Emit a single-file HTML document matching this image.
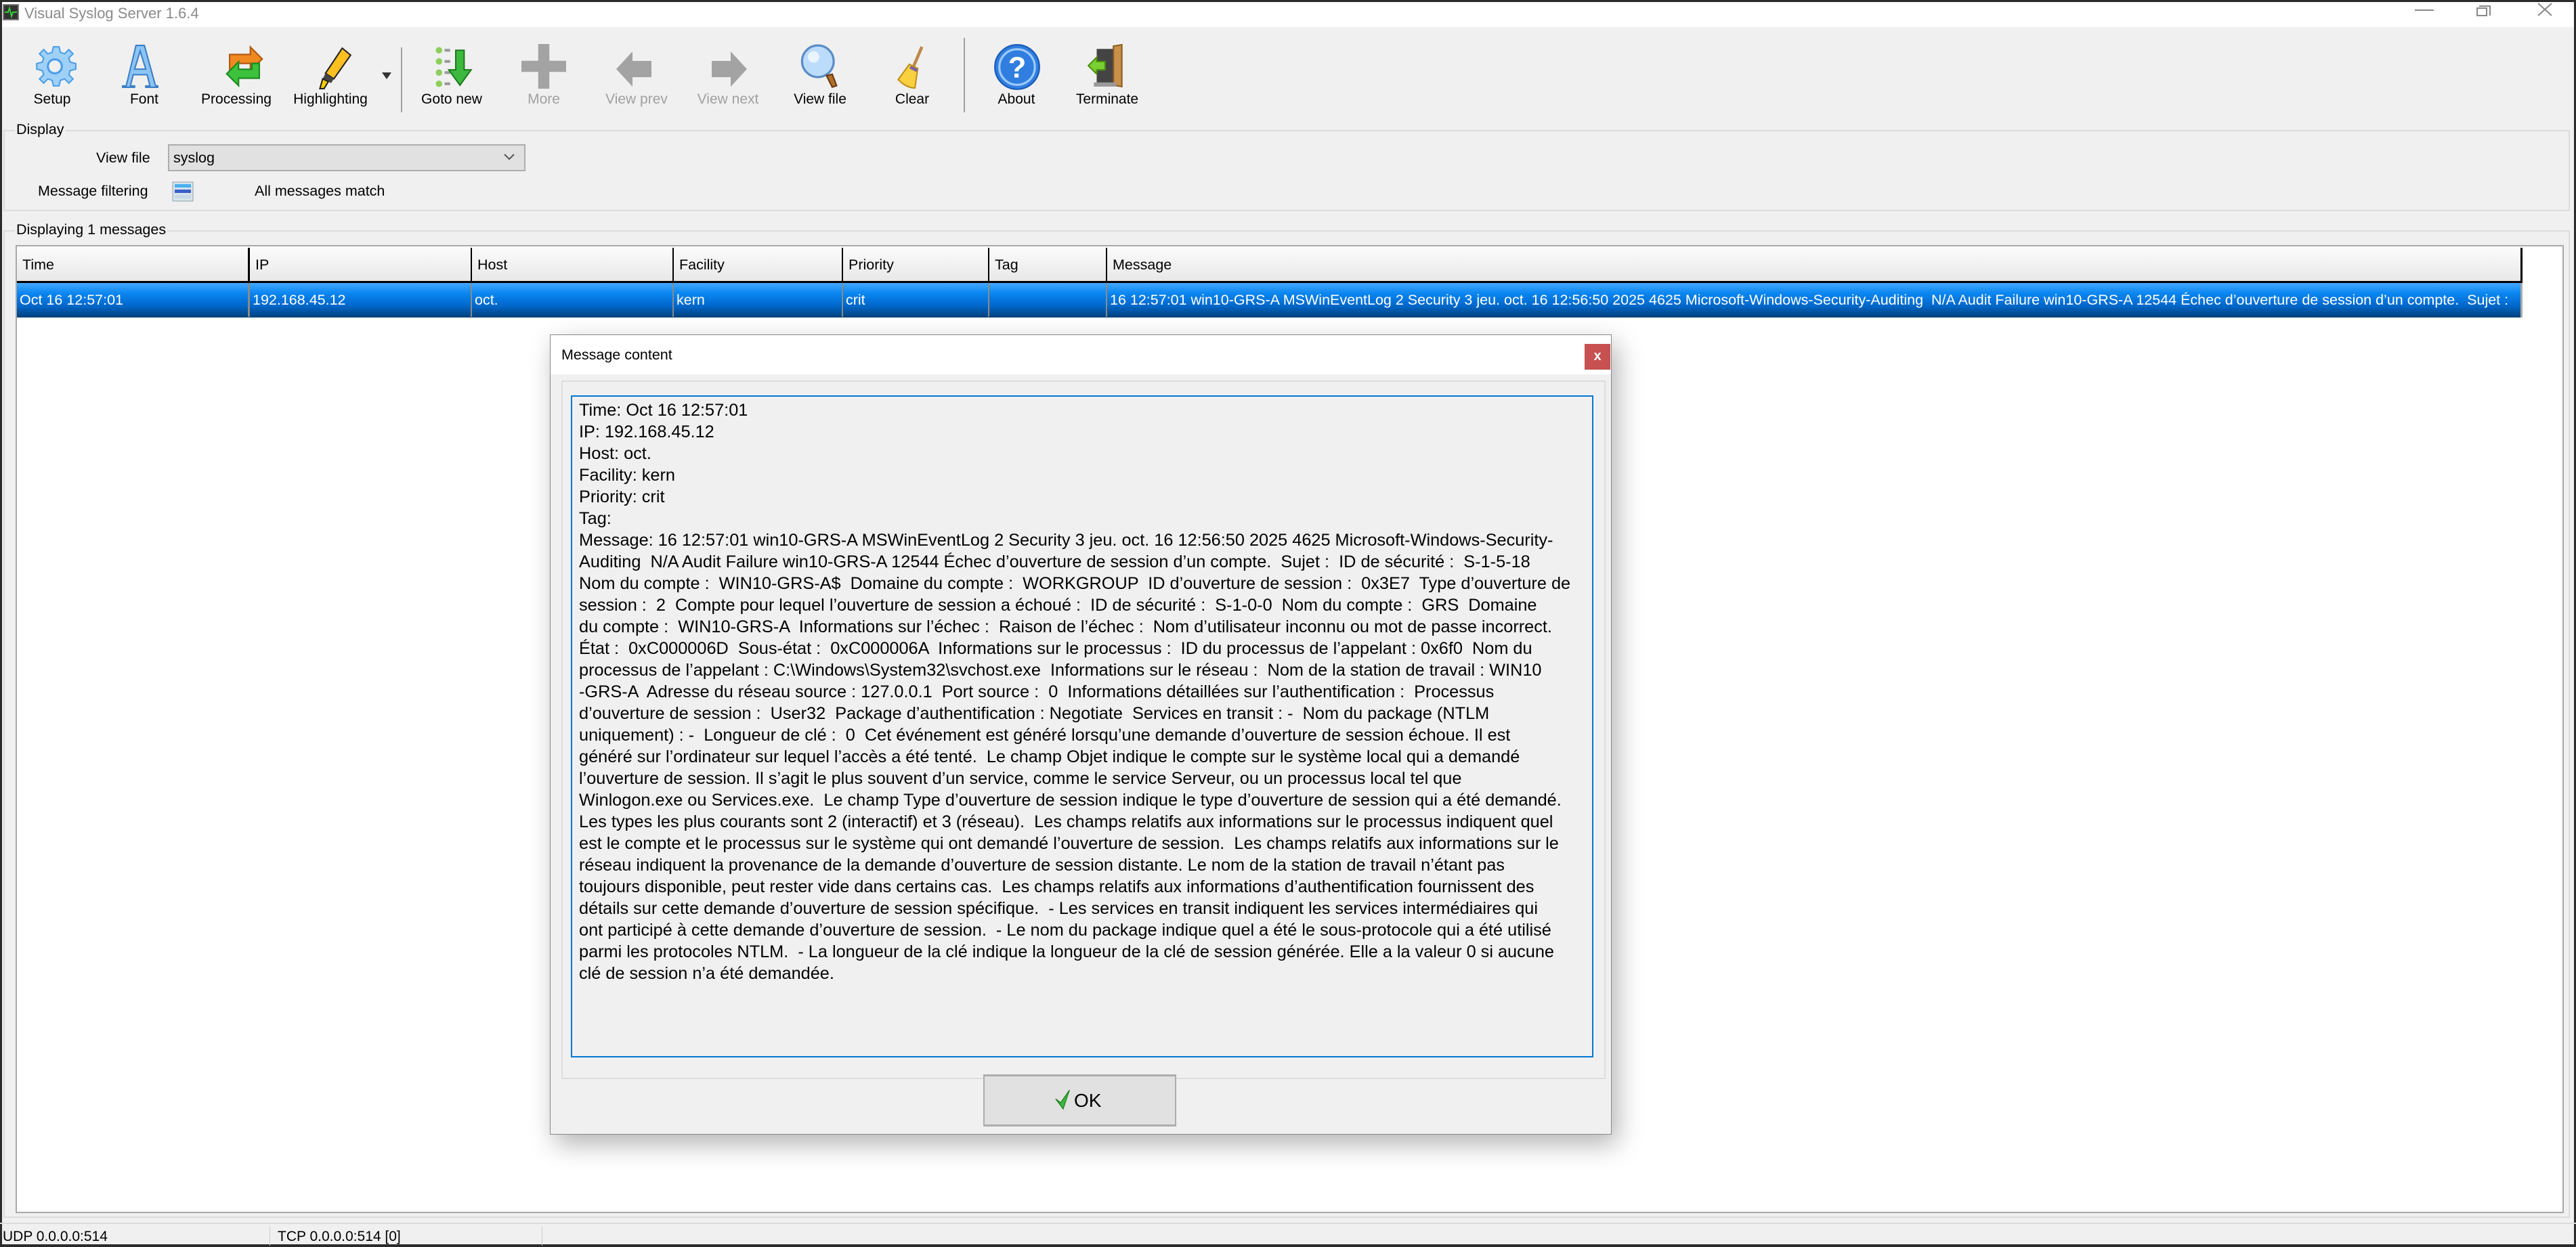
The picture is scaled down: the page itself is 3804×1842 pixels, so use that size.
<!DOCTYPE html>
<html><head><meta charset="utf-8">
<style>
*{margin:0;padding:0;box-sizing:border-box}
body{width:3804px;height:1842px;background:#f0f0f0;font-family:"Liberation Sans",Tahoma,sans-serif;color:#000;position:relative;overflow:hidden}
.a{position:absolute;white-space:nowrap}
.lbl{font-size:21px;transform:translateX(-50%);top:135px}
.dis{color:#a0a0a0}
.hd{position:absolute;top:0;height:51px;font-size:21.5px;line-height:50px;padding-left:8px}
.cell{position:absolute;top:0;height:50px;font-size:21.5px;line-height:50px;padding-left:4px;color:#fff}
#txt div{height:32px;line-height:32px}
</style></head><body>
<div class="a" style="left:0;top:0;width:3804px;height:3px;background:#2b2b2b"></div>
<div class="a" style="left:0;top:0;width:3px;height:1842px;background:#2b2b2b"></div>
<div class="a" style="left:3801px;top:0;width:3px;height:1842px;background:#2b2b2b"></div>
<div class="a" style="left:0;top:1838px;width:3804px;height:4px;background:#2b2b2b"></div>
<div class="a" style="left:3px;top:3px;width:3798px;height:37px;background:#fff"></div>
<div class="a" style="left:4px;top:6px;width:24px;height:24px;background:#333;border:2px solid #777"><svg width="20" height="20"><path d="M1 10h5l2-6 3 12 2-6h6" stroke="#3c3" stroke-width="2" fill="none"/></svg></div>
<div class="a" style="left:36px;top:7px;font-size:22px;color:#8a8a8a">Visual Syslog Server 1.6.4</div>
<div class="a" style="left:3566px;top:14px;width:28px;height:2px;background:#888"></div>
<div class="a" style="left:3661px;top:8px;width:17px;height:15px;border:2px solid #888;border-bottom:none;border-left:none"></div>
<div class="a" style="left:3657px;top:11px;width:16px;height:13px;border:2px solid #888;background:#fff"></div>
<svg class="a" style="left:3746px;top:3px" width="24" height="22"><path d="M2 2L22 20M22 2L2 20" stroke="#888" stroke-width="2"/></svg>

<svg class="a" style="left:48px;top:65px" width="66" height="66" viewBox="0 0 32 32"><path d="M16 2l3 0 1 4 3 1 3-3 3 3-3 3 1 3 4 1v4l-4 1-1 3 3 3-3 3-3-3-3 1-1 4h-4l-1-4-3-1-3 3-3-3 3-3-1-3-4-1v-4l4-1 1-3-3-3 3-3 3 3 3-1 1-4z" fill="#9fd0f8" stroke="#4a9ee8"/><circle cx="16" cy="16" r="5" fill="#f0f0f0" stroke="#4a9ee8" stroke-width="1.5"/></svg>
<svg class="a" style="left:180px;top:65px" width="54" height="66" viewBox="0 0 26 32"><path d="M10 1h6l8 29h4v1H17v-1h3l-2-8H8l-2 8h3v1H0v-1h3zM9 18h8L13 5z" fill="#8cc4f4" stroke="#3a7fc8"/></svg>
<svg class="a" style="left:326px;top:63px" width="70" height="70" viewBox="0 0 32 32"><path d="M6 18V8h14V3l8 8-8 8v-5H11v4z" fill="#f08a20" stroke="#b35a10"/><path d="M26 14v10H12v5l-8-8 8-8v5h9v-4z" fill="#3cc23c" stroke="#1f8a1f"/></svg>
<svg class="a" style="left:460px;top:66px" width="66" height="68" viewBox="0 0 32 32"><path d="M22 2l6 5-12 17-6-4z" fill="#ffc020" stroke="#222"/><path d="M10 20l6 4-2 3-6-3z" fill="#444"/><path d="M8 24l4 2-3 5H6z" fill="#ffcc00" stroke="#222"/></svg>
<svg class="a" style="left:564px;top:104px" width="14" height="14"><path d="M0 3h14L7 13z" fill="#333"/></svg>
<div class="a" style="left:592px;top:70px;width:2px;height:96px;background:#a0a0a0"></div>
<svg class="a" style="left:638px;top:66px" width="70" height="66" viewBox="0 0 32 32"><g fill="#8ccf5a"><circle cx="4" cy="4" r="2.3"/><circle cx="4" cy="12" r="2.3"/><circle cx="4" cy="20" r="2.3"/><circle cx="4" cy="28" r="2.3"/></g><g fill="#999"><rect x="8" y="3" width="4" height="2"/><rect x="8" y="11" width="4" height="2"/><rect x="8" y="19" width="4" height="2"/><rect x="8" y="27" width="4" height="2"/></g><path d="M16 4h6v14h5l-8 11-8-11h5z" fill="#3cb83c" stroke="#1f7a1f"/></svg>
<svg class="a" style="left:770px;top:65px" width="66" height="66" viewBox="0 0 32 32"><path d="M12 0h8v12h12v8H20v12h-8V20H0v-8h12z" fill="#a3a3a3"/></svg>
<svg class="a" style="left:910px;top:74px" width="56" height="56" viewBox="0 0 28 28"><path d="M0 14L12 1v7h14v12H12v7z" fill="#a3a3a3"/></svg>
<svg class="a" style="left:1047px;top:74px" width="56" height="56" viewBox="0 0 28 28"><path d="M28 14L16 1v7H2v12h14v7z" fill="#a3a3a3"/></svg>
<svg class="a" style="left:1178px;top:64px" width="68" height="70" viewBox="0 0 32 32"><circle cx="14" cy="12" r="11" fill="#bcdcfc" stroke="#5a8cc8" stroke-width="1.5"/><circle cx="11" cy="9" r="4" fill="#eaf4ff"/><path d="M20 22l4 8 3-1-3-8z" fill="#b0702a" stroke="#6a3a10"/></svg>
<svg class="a" style="left:1314px;top:64px" width="66" height="70" viewBox="0 0 32 32"><path d="M22 1l2 1-6 14-2-1z" fill="#c08848"/><path d="M14 14l6 3-2 14c-6 0-10-4-12-6z" fill="#f8d040" stroke="#c09018"/><path d="M15 15l5 2.5-1 2-5-2.5z" fill="#8060a0"/></svg>
<div class="a" style="left:1423px;top:56px;width:2px;height:110px;background:#a0a0a0"></div>
<svg class="a" style="left:1467px;top:64px" width="70" height="70" viewBox="0 0 32 32"><circle cx="16" cy="16" r="15" fill="#2f7ee0" stroke="#1a5ab8"/><circle cx="16" cy="16" r="12" fill="none" stroke="#9cc8f8" stroke-width="1.5"/><text x="16" y="23" font-size="20" font-weight="bold" fill="#fff" text-anchor="middle" font-family="Liberation Sans">?</text></svg>
<svg class="a" style="left:1603px;top:62px" width="66" height="70" viewBox="0 0 32 32"><rect x="8" y="4" width="14" height="26" fill="#444"/><path d="M20 2l6-1v30l-6-1z" fill="#c8904a" stroke="#8a5a20"/><rect x="6" y="28" width="16" height="3" fill="#999"/><path d="M2 16l6-6v3h6v6H8v3z" fill="#7ad030" stroke="#4a9010"/></svg>
<div class="a lbl" style="left:77px">Setup</div>
<div class="a lbl" style="left:213px">Font</div>
<div class="a lbl" style="left:349px">Processing</div>
<div class="a lbl" style="left:488px">Highlighting</div>
<div class="a lbl" style="left:667px">Goto new</div>
<div class="a lbl dis" style="left:803px">More</div>
<div class="a lbl dis" style="left:940px">View prev</div>
<div class="a lbl dis" style="left:1075px">View next</div>
<div class="a lbl" style="left:1211px">View file</div>
<div class="a lbl" style="left:1347px">Clear</div>
<div class="a lbl" style="left:1501px">About</div>
<div class="a lbl" style="left:1635px">Terminate</div>

<div class="a" style="left:5px;top:192px;width:3790px;height:120px;border:2px solid #dcdcdc"></div>
<div class="a" style="left:22px;top:179px;font-size:21.5px;background:#f0f0f0;padding:0 2px">Display</div>
<div class="a" style="left:142px;top:221px;font-size:21.5px">View file</div>
<div class="a" style="left:248px;top:213px;width:528px;height:40px;background:#e1e1e1;border:2px solid #adadad;font-size:21.5px;line-height:36px;padding-left:6px">syslog</div>
<svg class="a" style="left:744px;top:226px" width="16" height="12"><path d="M1 2l7 7 7-7" stroke="#555" stroke-width="2" fill="none"/></svg>
<div class="a" style="left:56px;top:270px;font-size:21.5px">Message filtering</div>
<svg class="a" style="left:254px;top:268px" width="32" height="30"><rect x="1" y="1" width="30" height="28" fill="#d8e4ec" stroke="#90a0a8"/><rect x="4" y="4" width="24" height="5" fill="#4ab0f0"/><rect x="4" y="12" width="24" height="5" fill="#3a5fc8"/><rect x="4" y="20" width="24" height="5" fill="#c8d8e4"/></svg>
<div class="a" style="left:376px;top:270px;font-size:21.5px">All messages match</div>

<div class="a" style="left:5px;top:340px;width:3790px;height:1459px;border:2px solid #dcdcdc"></div>
<div class="a" style="left:22px;top:327px;font-size:21.5px;background:#f0f0f0;padding:0 2px">Displaying 1 messages</div>
<div class="a" style="left:23px;top:362px;width:3763px;height:1430px;background:#fff;border:2px solid #a8a8a8"></div>
<div class="a" style="left:25px;top:366px;width:3700px;height:52px;background:linear-gradient(#fbfbfb,#e8e8e8);border-bottom:3px solid #000;border-right:3px solid #000">
 <div class="hd" style="left:0">Time</div>
 <div class="hd" style="left:341px;border-left:3px solid #000">IP</div>
 <div class="hd" style="left:670px;border-left:2px solid #000">Host</div>
 <div class="hd" style="left:968px;border-left:2px solid #000">Facility</div>
 <div class="hd" style="left:1218px;border-left:2px solid #000">Priority</div>
 <div class="hd" style="left:1434px;border-left:2px solid #000">Tag</div>
 <div class="hd" style="left:1608px;border-left:2px solid #000">Message</div>
</div>
<div class="a" style="left:25px;top:418px;width:3700px;height:51px;background:linear-gradient(#44a8ff 0%,#0a86f0 30%,#0068cc 65%,#00407a 100%);border-right:3px solid #aaa;overflow:hidden">
 <div class="cell" style="left:0">Oct 16 12:57:01</div>
 <div class="cell" style="left:341px;border-left:3px solid #8a8a8a">192.168.45.12</div>
 <div class="cell" style="left:670px;border-left:2px solid #8a8a8a">oct.</div>
 <div class="cell" style="left:968px;border-left:2px solid #8a8a8a">kern</div>
 <div class="cell" style="left:1218px;border-left:2px solid #8a8a8a">crit</div>
 <div class="cell" style="left:1434px;border-left:2px solid #8a8a8a;width:174px"></div>
 <div class="cell" style="left:1608px;border-left:2px solid #8a8a8a">16 12:57:01 win10-GRS-A MSWinEventLog 2 Security 3 jeu. oct. 16 12:56:50 2025 4625 Microsoft-Windows-Security-Auditing&nbsp; N/A Audit Failure win10-GRS-A 12544 Échec d’ouverture de session d’un compte.&nbsp; Sujet :</div>
</div>

<div class="a" style="left:0;top:1806px;width:3804px;height:2px;background:#dcdcdc"></div>
<div class="a" style="left:4px;top:1815px;font-size:21px">UDP 0.0.0.0:514</div>
<div class="a" style="left:398px;top:1812px;width:1px;height:28px;background:#ccc"></div>
<div class="a" style="left:410px;top:1815px;font-size:21px">TCP 0.0.0.0:514 [0]</div>
<div class="a" style="left:800px;top:1812px;width:1px;height:28px;background:#ccc"></div>

<div class="a" style="left:812px;top:494px;width:1568px;height:1182px;background:#f0f0f0;border:1px solid #888;box-shadow:8px 14px 36px rgba(0,0,0,0.3)">
 <div class="a" style="left:0;top:0;width:1566px;height:58px;background:#fff"></div>
 <div class="a" style="left:16px;top:17px;font-size:21.5px">Message content</div>
 <div class="a" style="left:1527px;top:13px;width:38px;height:38px;background:#c75050;color:#fff;font-size:20px;font-weight:bold;text-align:center;line-height:36px">x</div>
 <div class="a" style="left:16px;top:67px;width:1542px;height:1032px;border:2px solid #dcdcdc"></div>
 <div class="a" id="txt" style="left:30px;top:89px;width:1510px;height:978px;border:2px solid #0078d7;background:#f0f0f0;font-size:25.3px;padding:4px 0 0 10px;white-space:pre;overflow:hidden"><div>Time: Oct 16 12:57:01</div><div>IP: 192.168.45.12</div><div>Host: oct.</div><div>Facility: kern</div><div>Priority: crit</div><div>Tag:</div><div>Message: 16 12:57:01 win10-GRS-A MSWinEventLog 2 Security 3 jeu. oct. 16 12:56:50 2025 4625 Microsoft-Windows-Security-</div><div>Auditing  N/A Audit Failure win10-GRS-A 12544 Échec d’ouverture de session d’un compte.  Sujet :  ID de sécurité :  S-1-5-18</div><div>Nom du compte :  WIN10-GRS-A$  Domaine du compte :  WORKGROUP  ID d’ouverture de session :  0x3E7  Type d’ouverture de</div><div>session :  2  Compte pour lequel l’ouverture de session a échoué :  ID de sécurité :  S-1-0-0  Nom du compte :  GRS  Domaine</div><div>du compte :  WIN10-GRS-A  Informations sur l’échec :  Raison de l’échec :  Nom d’utilisateur inconnu ou mot de passe incorrect.</div><div>État :  0xC000006D  Sous-état :  0xC000006A  Informations sur le processus :  ID du processus de l’appelant : 0x6f0  Nom du</div><div>processus de l’appelant : C:\Windows\System32\svchost.exe  Informations sur le réseau :  Nom de la station de travail : WIN10</div><div>-GRS-A  Adresse du réseau source : 127.0.0.1  Port source :  0  Informations détaillées sur l’authentification :  Processus</div><div>d’ouverture de session :  User32  Package d’authentification : Negotiate  Services en transit : -  Nom du package (NTLM</div><div>uniquement) : -  Longueur de clé :  0  Cet événement est généré lorsqu’une demande d’ouverture de session échoue. Il est</div><div>généré sur l’ordinateur sur lequel l’accès a été tenté.  Le champ Objet indique le compte sur le système local qui a demandé</div><div>l’ouverture de session. Il s’agit le plus souvent d’un service, comme le service Serveur, ou un processus local tel que</div><div>Winlogon.exe ou Services.exe.  Le champ Type d’ouverture de session indique le type d’ouverture de session qui a été demandé.</div><div>Les types les plus courants sont 2 (interactif) et 3 (réseau).  Les champs relatifs aux informations sur le processus indiquent quel</div><div>est le compte et le processus sur le système qui ont demandé l’ouverture de session.  Les champs relatifs aux informations sur le</div><div>réseau indiquent la provenance de la demande d’ouverture de session distante. Le nom de la station de travail n’étant pas</div><div>toujours disponible, peut rester vide dans certains cas.  Les champs relatifs aux informations d’authentification fournissent des</div><div>détails sur cette demande d’ouverture de session spécifique.  - Les services en transit indiquent les services intermédiaires qui</div><div>ont participé à cette demande d’ouverture de session.  - Le nom du package indique quel a été le sous-protocole qui a été utilisé</div><div>parmi les protocoles NTLM.  - La longueur de la clé indique la longueur de la clé de session générée. Elle a la valeur 0 si aucune</div><div>clé de session n’a été demandée.</div></div>
 <div class="a" style="left:639px;top:1092px;width:285px;height:77px;background:#e1e1e1;border:2px solid #adadad;border-top-width:3px;border-bottom-width:3px"></div>
 <svg class="a" style="left:745px;top:1115px" width="24" height="30" viewBox="0 0 12 16"><path d="M0 7l4 3 7-10-5 15z" fill="#3cb83c" stroke="#1a7a1a" stroke-width=".6"/></svg>
 <div class="a" style="left:773px;top:1115px;font-size:28px">OK</div>
</div>
</body></html>
